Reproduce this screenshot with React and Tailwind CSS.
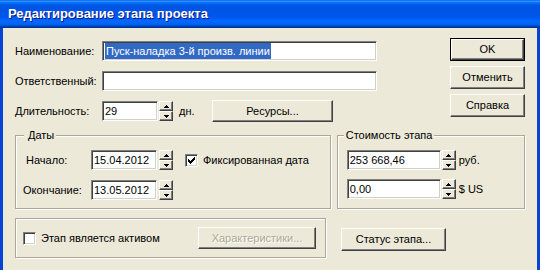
import React from 'react';

const sunken =
  'border border-t-[#808080] border-l-[#808080] border-b-white border-r-white shadow-[inset_1px_1px_0_#404040,inset_-1px_-1px_0_#d4d0c8]';
const raised =
  'border border-t-white border-l-white border-b-[#404040] border-r-[#404040] shadow-[inset_-1px_-1px_0_#808080]';

function Edit({ className, children }) {
  return (
    <div className={`flex h-[20px] items-center bg-white pl-[2px] ${sunken} ${className}`}>
      {children}
    </div>
  );
}

function Arrow({ down }) {
  return (
    <svg width="5" height="3" viewBox="0 0 5 3" shapeRendering="crispEdges" className={down ? 'rotate-180' : ''}>
      <path d="M2 0h1v1h1v1h1v1H0V2h1V1h1z" fill="#000" />
    </svg>
  );
}

function Spin({ className = '' }) {
  return (
    <div className={`flex h-[20px] w-[14px] flex-col ${className}`}>
      <div className={`flex h-[10px] items-center justify-center bg-[#ece9d8] ${raised}`}>
        <Arrow />
      </div>
      <div className={`flex h-[10px] items-center justify-center bg-[#ece9d8] ${raised}`}>
        <Arrow down />
      </div>
    </div>
  );
}

function Btn({ className, children, def, disabled }) {
  const face = (
    <div
      className={`flex h-full w-full items-center justify-center bg-[#ece9d8] ${raised} ${
        disabled ? 'text-[#aca899] [text-shadow:1px_1px_0_#fff]' : 'text-black'
      }`}
    >
      {children}
    </div>
  );
  if (def) return <div className={`border border-black ${className}`}>{face}</div>;
  return <div className={className}>{face}</div>;
}

function Check({ checked }) {
  return (
    <div className={`flex h-[13px] w-[13px] items-center justify-center bg-white ${sunken}`}>
      {checked && (
        <svg width="7" height="7" viewBox="0 0 7 7" shapeRendering="crispEdges">
          <path d="M6 0h1v3H6v1H5v1H4v1H3v1H2V6H1V5H0V2h1v1h1v1h1V3h1V2h1V1h1z" fill="#000" />
        </svg>
      )}
    </div>
  );
}

const frame = 'border border-[#aca899] shadow-[inset_1px_1px_0_#fff,1px_1px_0_#fff]';

export default function App() {
  return (
    <div className="flex h-[270px] w-[540px] flex-col overflow-hidden font-['Liberation_Sans',Arial,sans-serif] text-[11px] text-black">
      {/* title bar */}
      <div className="flex h-[28px] shrink-0 items-center bg-[linear-gradient(180deg,#0058ee_0%,#3593ff_4%,#288eff_6%,#127dff_8%,#036ffc_10%,#0262ee_14%,#0057e5_20%,#0054e3_24%,#0055eb_56%,#005bf5_66%,#026afe_76%,#0062ef_86%,#0052d6_92%,#0040ab_94%,#003092_100%)] pl-[8px]">
        <span className="text-[13px] font-bold text-white [text-shadow:1px_1px_0_#0a1883]">
          Редактирование этапа проекта
        </span>
      </div>

      {/* body */}
      <div className="flex flex-1 flex-col border-x-[3px] border-[#0843d8] bg-[#ece9d8] pl-[12px] pr-[12px] pt-[10px]">
        {/* top */}
        <div className="flex items-start">
          <div className="flex flex-col">
            <div className="mt-[3px] flex items-center">
              <span className="w-[87px]">Наименование:</span>
              <Edit className="w-[275px]">
                <span className="bg-[#316ac5] px-[1px] text-white">Пуск-наладка 3-й произв. линии</span>
              </Edit>
            </div>
            <div className="mt-[10px] flex items-center">
              <span className="w-[87px]">Ответственный:</span>
              <Edit className="w-[275px]" />
            </div>
            <div className="mt-[9px] flex h-[22px] items-center">
              <span className="w-[87px]">Длительность:</span>
              <Edit className="w-[56px]">29</Edit>
              <Spin className="ml-[1px]" />
              <span className="w-[39px] pl-[6px]">дн.</span>
              <Btn className="h-[22px] w-[121px]">Ресурсы...</Btn>
            </div>
          </div>
          <div className="ml-auto flex flex-col gap-[5px]">
            <Btn def className="h-[23px] w-[75px]">OK</Btn>
            <Btn className="h-[23px] w-[75px]">Отменить</Btn>
            <Btn className="h-[23px] w-[75px]">Справка</Btn>
          </div>
        </div>

        {/* groups */}
        <div className="mt-[7px] flex items-start">
          <fieldset className={`h-[80px] w-[317px] ${frame}`}>
            <legend className="ml-[8px] bg-[#ece9d8] pl-[4px] pr-[2px] leading-[13px]">Даты</legend>
            <div className="flex flex-col pl-[7px] pt-[8px]">
              <div className="flex items-center">
                <span className="w-[68px] pl-[3px]">Начало:</span>
                <Edit className="w-[66px]">15.04.2012</Edit>
                <Spin className="ml-[2px]" />
                <div className="ml-[12px]">
                  <Check checked />
                </div>
                <span className="ml-[5px]">Фиксированная дата</span>
              </div>
              <div className="mt-[10px] flex items-center">
                <span className="w-[68px]">Окончание:</span>
                <Edit className="w-[66px]">13.05.2012</Edit>
                <Spin className="ml-[2px]" />
              </div>
            </div>
          </fieldset>
          <fieldset className={`ml-[6px] h-[80px] w-[189px] ${frame}`}>
            <legend className="ml-[6px] bg-[#ece9d8] px-[2px] leading-[13px]">Стоимость этапа</legend>
            <div className="flex flex-col pl-[9px] pt-[8px]">
              <div className="flex items-center">
                <Edit className="w-[94px]">253 668,46</Edit>
                <Spin className="ml-[1px]" />
                <span className="ml-[3px]">руб.</span>
              </div>
              <div className="mt-[9px] flex items-center">
                <Edit className="w-[94px]">0,00</Edit>
                <Spin className="ml-[1px]" />
                <span className="ml-[3px]">$ US</span>
              </div>
            </div>
          </fieldset>
        </div>

        {/* bottom */}
        <div className="mt-[9px] flex items-start">
          <div className={`flex h-[40px] w-[311px] items-center pl-[7px] pr-[9px] ${frame}`}>
            <Check />
            <span className="ml-[5px]">Этап является активом</span>
            <Btn disabled className="ml-auto h-[22px] w-[118px]">Характеристики...</Btn>
          </div>
          <Btn className="ml-[15px] mt-[10px] h-[23px] w-[105px]">Статус этапа...</Btn>
        </div>
      </div>
    </div>
  );
}
